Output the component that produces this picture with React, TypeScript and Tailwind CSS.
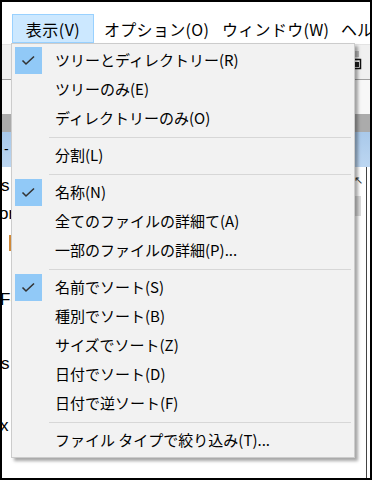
import React from 'react';

type Item = { t: string; c?: boolean } | 'sep';

const items: Item[] = [
  { t: 'ツリーとディレクトリー(R)', c: true },
  { t: 'ツリーのみ(E)' },
  { t: 'ディレクトリーのみ(O)' },
  'sep',
  { t: '分割(L)' },
  'sep',
  { t: '名称(N)', c: true },
  { t: '全てのファイルの詳細て(A)' },
  { t: '一部のファイルの詳細(P)...' },
  'sep',
  { t: '名前でソート(S)', c: true },
  { t: '種別でソート(B)' },
  { t: 'サイズでソート(Z)' },
  { t: '日付でソート(D)' },
  { t: '日付で逆ソート(F)' },
  'sep',
  { t: 'ファイル タイプで絞り込み(T)...' },
];

function Check() {
  return (
    <svg width="27" height="27" viewBox="0 0 27 27">
      <polyline points="7.5,13.5 11,17 19,9.5" fill="none" stroke="#333" strokeWidth="1.6" />
    </svg>
  );
}

export default function App() {
  return (
    <div className="w-[372px] h-[480px] border-2 border-black relative overflow-hidden bg-white font-['Noto_Sans_CJK_JP',sans-serif] text-black">
      <div className="flex flex-col h-full">
        {/* menubar */}
        <div className="h-[42px] flex items-end pb-[1px] bg-white text-[16px] whitespace-nowrap overflow-hidden">
          <div className="shrink-0 ml-[10px] w-[82px] h-[29px] border border-[#99d1ff] bg-[#cce8ff] flex items-center justify-center tracking-[0.5px]">表示(V)</div>
          <div className="shrink-0 w-[119px] h-[29px] flex items-center pl-[10px] tracking-[0.3px]">オプション(O)</div>
          <div className="shrink-0 w-[119px] h-[29px] flex items-center pl-[9px] tracking-[0.3px]">ウィンドウ(W)</div>
          <div className="shrink-0 h-[29px] flex items-center pl-[9px]">ヘルプ(H)</div>
        </div>
        {/* toolbar */}
        <div className="h-[36px] bg-[#f0f0f0] border-t border-[#e3e3e3] border-b border-b-[#a0a0a0] flex justify-end items-start pr-[8px] pt-[6px]">
          <svg width="10" height="20" viewBox="0 0 10 20">
            <rect x="1" y="0" width="6" height="6" fill="#bdbdbd" />
            <rect x="0.5" y="8.5" width="8" height="9" fill="#fff" stroke="#111" strokeWidth="1.5" />
            <rect x="2" y="11" width="5" height="5" fill="#222" />
          </svg>
        </div>
        <div className="h-[34px] bg-[#f7f7f7]" />
        <div className="h-[18px] bg-[#ababab]" />
        <div className="h-[35px] bg-gradient-to-b from-[#a9c9ea] to-[#bcd6f1] flex items-center pl-[2px] text-[14px] font-['Liberation_Sans',sans-serif]">-</div>
        {/* content */}
        <div className="flex-1 flex font-['Liberation_Sans',sans-serif] text-[17px] leading-none">
          <div className="flex-1 flex flex-col">
            <div className="h-[10px]" />
            <div className="h-[20px] -ml-[1px]">s</div>
            <div className="h-[8px]" />
            <div className="h-[20px] -ml-[3px]">or</div>
            <div className="h-[10px]" />
            <div className="h-[16px] ml-[7px] w-[2px] bg-[#d08a3a]" />
            <div className="h-[40px]" />
            <div className="h-[20px] -ml-[2px]">F-</div>
            <div className="h-[44px]" />
            <div className="h-[20px] -ml-[1px]">s</div>
            <div className="h-[42px]" />
            <div className="h-[20px] -ml-[2px]">x</div>
          </div>
          <div className="w-[12px] flex flex-col items-start pt-[8px]">
            <div className="text-[11px] text-[#333]">↖</div>
            <div className="mt-[10px] w-[7px] h-[20px] bg-[#dcdcdc]" />
          </div>
          <div className="w-[4px] border-l border-[#444] bg-white" />
        </div>
      </div>

      {/* dropdown menu */}
      <div className="absolute left-[9px] top-[41px] w-[344px] bg-[#f2f2f2] border border-[#cccccc] shadow-[3px_3px_3px_rgba(0,0,0,0.35)] py-[2px] text-[15px]">
        {items.map((it, i) =>
          it === 'sep' ? (
            <div key={i} className="h-[8px] flex items-center pl-[37px] pr-[3px]">
              <div className="h-px w-full bg-[#d7d7d7]" />
            </div>
          ) : (
            <div key={i} className="h-[29px] flex items-center">
              <div className="w-[43px] h-full flex items-center">
                {it.c ? (
                  <div className="ml-[3px] w-[27px] h-[27px] bg-[#91c9f7]">
                    <Check />
                  </div>
                ) : null}
              </div>
              <div className="whitespace-nowrap">{it.t}</div>
            </div>
          )
        )}
      </div>
    </div>
  );
}
